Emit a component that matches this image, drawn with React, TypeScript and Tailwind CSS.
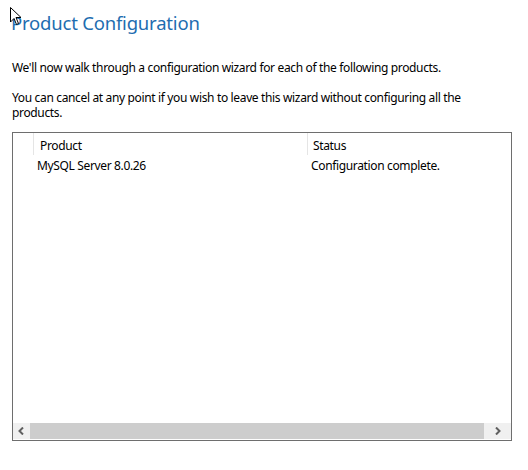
import React from 'react'

const font = { fontFamily: '"Noto Sans", "Open Sans", sans-serif' }

function Cursor() {
  return (
    <svg className="absolute left-[9px] top-[6px]" width="14" height="20" viewBox="0 0 14 20">
      <path d="M1.5 1.5 L1.5 16 L5 12.5 L7.5 18.5 L9.5 17.5 L7 11.5 L12 11.5 Z" fill="white" stroke="black" strokeWidth="1" strokeLinejoin="miter" />
    </svg>
  )
}

export default function App() {
  return (
    <div className="relative w-[528px] h-[470px] bg-white text-[12px] tracking-[-0.35px] text-black overflow-hidden" style={font}>
      <Cursor />
      <h1 className="pl-[11px] pt-[11px] text-[18.5px] leading-[24px] tracking-[-0.2px] text-[#1e6db0]">Product Configuration</h1>
      <p className="pl-[12px] mt-[25px] leading-[15px]">We'll now walk through a configuration wizard for each of the following products.</p>
      <p className="pl-[12px] mt-[15px] leading-[15px] w-[480px]">
        You can cancel at any point if you wish to leave this wizard without configuring all the products.
      </p>
      <div className="ml-[12px] mt-[12px] w-[500px] h-[309px] border border-[#6e6e6e] flex flex-col">
        <div className="flex-1">
          <div className="flex h-[22px]">
            <div className="w-[21px] border-r border-[#e5e5e5]" />
            <div className="w-[274px] border-r border-[#e5e5e5] pl-[6px] pt-[3px] leading-[19px]">Product</div>
            <div className="flex-1 pl-[5px] pt-[3px] leading-[19px]">Status</div>
          </div>
          <div className="flex h-[19px] leading-[19px] pt-[1px]">
            <div className="w-[24px]" />
            <div className="w-[274px]">MySQL Server 8.0.26</div>
            <div className="flex-1">Configuration complete.</div>
          </div>
        </div>
        <div className="h-[16px] bg-[#f0f0f0] flex items-stretch mb-[1px]">
          <div className="w-[17px] flex items-center justify-center">
            <svg width="7" height="8" viewBox="0 0 7 8"><path d="M5 0.5 L1.5 4 L5 7.5" fill="none" stroke="#606060" strokeWidth="2" /></svg>
          </div>
          <div className="flex-1 bg-[#cdcdcd]" />
          <div className="w-[27px] flex items-center justify-center">
            <svg width="7" height="8" viewBox="0 0 7 8"><path d="M2 0.5 L5.5 4 L2 7.5" fill="none" stroke="#606060" strokeWidth="2" /></svg>
          </div>
        </div>
      </div>
    </div>
  )
}
